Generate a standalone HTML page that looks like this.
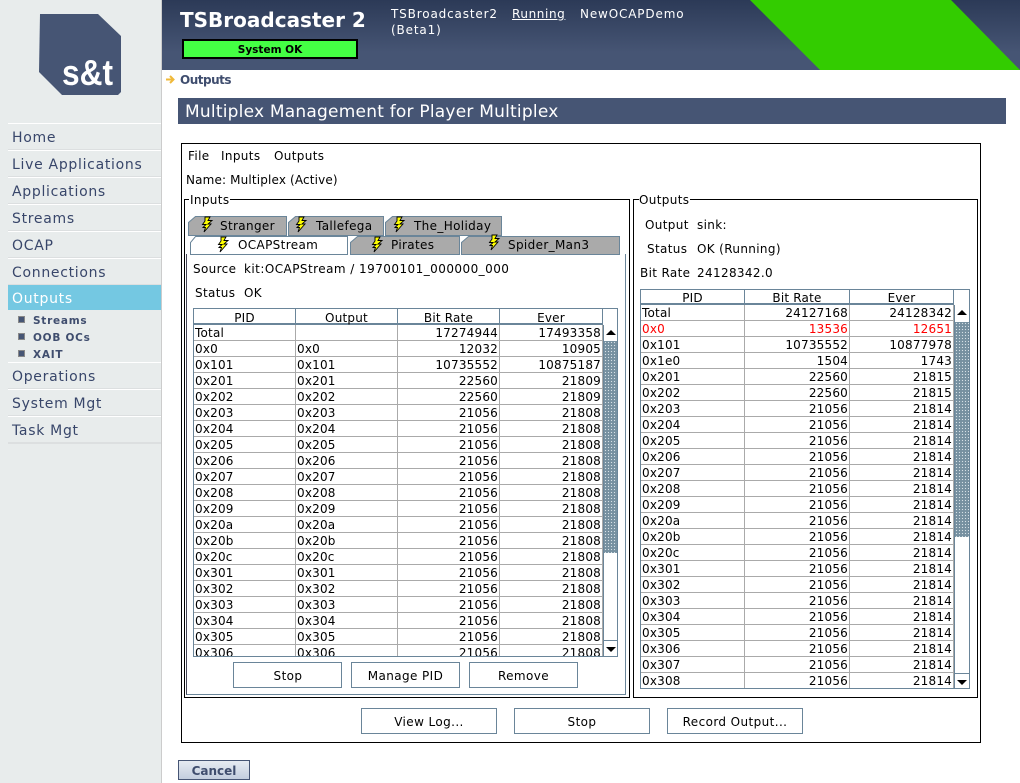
<!DOCTYPE html>
<html><head><meta charset="utf-8"><style>
html,body{margin:0;padding:0;background:#fff}
#p{position:relative;width:1020px;height:783px;overflow:hidden;background:#fff;font-family:"DejaVu Sans",sans-serif;font-size:12px;color:#000}
.a,.t{position:absolute}
.t{white-space:nowrap;line-height:16px}
.nav{position:absolute;left:8px;width:153px;height:25px;border-top:1px solid #fff;border-bottom:2px solid #dcdfe0;color:#38466a;font-size:14px;line-height:29px;text-indent:4px;letter-spacing:.7px}
.sub{position:absolute;left:33px;color:#3f4d6e;font-size:10.5px;font-weight:bold;line-height:16px;letter-spacing:.75px}
.bl{position:absolute;left:18px;width:5px;height:5px;background:#465574;border:1px solid #888}
.btn{position:absolute;box-sizing:border-box;border:1px solid #6a8599;background:#fff;text-align:center;line-height:26px;height:26px;letter-spacing:.4px}
table{border-spacing:0;table-layout:fixed;position:absolute;left:0;top:0}
td{box-sizing:border-box;height:16px;padding:2px 2px 0 1px;border-right:1px solid #aaa;border-bottom:1px solid #aaa;line-height:13px;white-space:nowrap;overflow:hidden;letter-spacing:.2px}
td.r{text-align:right;padding-right:1px}
tr.red td{color:#f00}
.hd{position:absolute;top:0;box-sizing:border-box;height:16px;text-align:center;line-height:18px;border-right:1px solid #6a8599;border-bottom:2px solid #6a8599;letter-spacing:.2px}
.thumb{position:absolute;background-color:#7690a0;background-image:radial-gradient(circle,#d6e0e6 .7px,transparent .8px);background-size:3px 3px}
.up{position:absolute;width:0;height:0;border-left:5px solid transparent;border-right:5px solid transparent;border-bottom:5px solid #000}
.dn{position:absolute;width:0;height:0;border-left:5px solid transparent;border-right:5px solid transparent;border-top:5px solid #000}
.tt{letter-spacing:.35px}
.hl{color:#fff;font-size:12px;letter-spacing:.85px}
</style></head><body><div id="p">
<!-- sidebar -->
<div class="a" style="left:0;top:0;width:161px;height:783px;background:#e8ecec;border-right:1px solid #ccc"></div>
<svg class="a" style="left:0;top:0" width="161" height="110"><polygon points="40,14 98,14 121,36 121,92 118,95 62,95 39,72" fill="#465574"/><text x="62" y="85" font-family="Liberation Sans" font-weight="bold" font-size="36" fill="#fff" textLength="51" lengthAdjust="spacingAndGlyphs">s&amp;t</text></svg>
<div class="nav" style="top:123px">Home</div>
<div class="nav" style="top:150px">Live Applications</div>
<div class="nav" style="top:177px">Applications</div>
<div class="nav" style="top:204px">Streams</div>
<div class="nav" style="top:231px">OCAP</div>
<div class="nav" style="top:258px">Connections</div>
<div class="nav" style="top:285px;background:#74c8e2;color:#fff;border:0;height:25px;line-height:28px">Outputs</div>
<div class="bl" style="top:316px"></div><div class="sub" style="top:313px">Streams</div>
<div class="bl" style="top:333px"></div><div class="sub" style="top:330px">OOB OCs</div>
<div class="bl" style="top:350px"></div><div class="sub" style="top:347px">XAIT</div>
<div class="nav" style="top:362px">Operations</div>
<div class="nav" style="top:389px">System Mgt</div>
<div class="nav" style="top:416px">Task Mgt</div>
<!-- header -->
<div class="a" style="left:162px;top:0;width:858px;height:70px;background:linear-gradient(#2c3a57,#465574 75%,#465574)"></div>
<svg class="a" style="left:162px;top:0" width="858" height="70"><polygon points="588,0 789,0 858,70 658,70" fill="#3c0"/></svg>
<div class="t" style="left:180px;top:8px;color:#fff;font-weight:bold;font-size:20px;line-height:24px">TSBroadcaster 2</div>
<div class="a" style="left:182px;top:39px;width:172px;height:16px;border:2px solid #000;background:#4f4;text-align:center;font-size:10.5px;font-weight:bold;line-height:18px">System OK</div>
<div class="t hl" style="left:391px;top:6px">TSBroadcaster2</div>
<div class="t hl" style="left:512px;top:6px;text-decoration:underline;letter-spacing:.6px">Running</div>
<div class="t hl" style="left:580px;top:6px">NewOCAPDemo</div>
<div class="t hl" style="left:391px;top:22px">(Beta1)</div>
<!-- breadcrumb -->
<svg class="a" style="left:165px;top:74px" width="12" height="12"><path d="M1 5.5H8M5 2L8.5 5.5L5 9" fill="none" stroke="#f0b93a" stroke-width="2"/></svg>
<div class="t" style="left:180px;top:72px;color:#3f4d6e;font-weight:bold;font-size:12px;letter-spacing:-.5px">Outputs</div>
<div class="a" style="left:178px;top:98px;width:828px;height:26px;background:#465574"></div>
<div class="t" style="left:185px;top:103px;color:#fff;font-size:17px;line-height:18px;letter-spacing:.22px">Multiplex Management for Player Multiplex</div>
<!-- main frame -->
<div class="a" style="left:181px;top:143px;width:798px;height:598px;border:1px solid #000"></div>
<div class="t tt" style="left:188px;top:148px">File</div>
<div class="t tt" style="left:221px;top:148px">Inputs</div>
<div class="t tt" style="left:274px;top:148px">Outputs</div>
<div class="t" style="left:186px;top:172px;letter-spacing:.15px">Name: Multiplex (Active)</div>
<!-- inputs group -->
<div class="a" style="left:184px;top:199px;width:444px;height:497px;border:1px solid #000"></div>
<div class="t tt" style="left:189px;top:192px;background:#fff;padding:0 1px">Inputs</div>
<div class="a" style="left:186px;top:254px;width:438px;height:440px;border-left:1px solid #445;border-right:1px solid #6a8599;border-bottom:1px solid #6a8599"></div>
<!-- tabs -->
<svg class="a" style="left:186px;top:212px" width="440" height="44">
<g stroke="#6a8599" fill="#aaa">
<polygon points="2.5,23.5 2.5,10.5 9.5,4.5 100.5,4.5 100.5,23.5"/>
<polygon points="102.5,23.5 102.5,10.5 109.5,4.5 197.5,4.5 197.5,23.5"/>
<polygon points="199.5,23.5 199.5,10.5 206.5,4.5 315.5,4.5 315.5,23.5"/>
<polygon points="164.5,42.5 164.5,30.5 171.5,24.5 273.5,24.5 273.5,42.5"/>
<polygon points="275.5,42.5 275.5,30.5 282.5,24.5 433.5,24.5 433.5,42.5"/>
<polygon points="4.5,42.5 4.5,30.5 9.5,24.5 161.5,24.5 161.5,42.5" fill="#fff"/>
</g>
<g fill="#ff0" stroke="#000" stroke-width=".9" stroke-linejoin="miter">
<path transform="translate(16,5)" d="M3 0H8L6 3.5H10L6 7H9L2 15L3.5 10.5H1L4 7.5H.5L3 4Z"/>
<path transform="translate(110,5)" d="M3 0H8L6 3.5H10L6 7H9L2 15L3.5 10.5H1L4 7.5H.5L3 4Z"/>
<path transform="translate(208,5)" d="M3 0H8L6 3.5H10L6 7H9L2 15L3.5 10.5H1L4 7.5H.5L3 4Z"/>
<path transform="translate(32,25)" d="M3 0H8L6 3.5H10L6 7H9L2 15L3.5 10.5H1L4 7.5H.5L3 4Z"/>
<path transform="translate(186,25)" d="M3 0H8L6 3.5H10L6 7H9L2 15L3.5 10.5H1L4 7.5H.5L3 4Z"/>
<path transform="translate(303,23)" d="M3 0H8L6 3.5H10L6 7H9L2 15L3.5 10.5H1L4 7.5H.5L3 4Z"/>
</g>
</svg>
<div class="t tt" style="left:220px;top:218px">Stranger</div>
<div class="t tt" style="left:316px;top:218px">Tallefega</div>
<div class="t tt" style="left:414px;top:218px">The_Holiday</div>
<div class="t tt" style="left:238px;top:237px">OCAPStream</div>
<div class="t tt" style="left:391px;top:237px">Pirates</div>
<div class="t tt" style="left:508px;top:237px">Spider_Man3</div>
<div class="t tt" style="left:193px;top:261px">Source</div>
<div class="t" style="left:244px;top:261px;letter-spacing:.45px">kit:OCAPStream / 19700101_000000_000</div>
<div class="t tt" style="left:195px;top:285px">Status</div>
<div class="t tt" style="left:244px;top:285px">OK</div>
<!-- left table -->
<div class="a" style="left:193px;top:308px;width:423px;height:347px;border:1px solid #6a8599;overflow:hidden">
<div class="hd" style="left:0;width:102px">PID</div>
<div class="hd" style="left:102px;width:102px">Output</div>
<div class="hd" style="left:204px;width:102px">Bit Rate</div>
<div class="hd" style="left:306px;width:103px">Ever</div>
<div class="a" style="left:0;top:16px;width:409px;height:331px;overflow:hidden">
<table style="width:409px"><colgroup><col style="width:102px"><col style="width:102px"><col style="width:102px"><col style="width:103px"></colgroup>
<tr><td>Total</td><td></td><td class="r">17274944</td><td class="r">17493358</td></tr>
<tr><td>0x0</td><td>0x0</td><td class="r">12032</td><td class="r">10905</td></tr>
<tr><td>0x101</td><td>0x101</td><td class="r">10735552</td><td class="r">10875187</td></tr>
<tr><td>0x201</td><td>0x201</td><td class="r">22560</td><td class="r">21809</td></tr>
<tr><td>0x202</td><td>0x202</td><td class="r">22560</td><td class="r">21809</td></tr>
<tr><td>0x203</td><td>0x203</td><td class="r">21056</td><td class="r">21808</td></tr>
<tr><td>0x204</td><td>0x204</td><td class="r">21056</td><td class="r">21808</td></tr>
<tr><td>0x205</td><td>0x205</td><td class="r">21056</td><td class="r">21808</td></tr>
<tr><td>0x206</td><td>0x206</td><td class="r">21056</td><td class="r">21808</td></tr>
<tr><td>0x207</td><td>0x207</td><td class="r">21056</td><td class="r">21808</td></tr>
<tr><td>0x208</td><td>0x208</td><td class="r">21056</td><td class="r">21808</td></tr>
<tr><td>0x209</td><td>0x209</td><td class="r">21056</td><td class="r">21808</td></tr>
<tr><td>0x20a</td><td>0x20a</td><td class="r">21056</td><td class="r">21808</td></tr>
<tr><td>0x20b</td><td>0x20b</td><td class="r">21056</td><td class="r">21808</td></tr>
<tr><td>0x20c</td><td>0x20c</td><td class="r">21056</td><td class="r">21808</td></tr>
<tr><td>0x301</td><td>0x301</td><td class="r">21056</td><td class="r">21808</td></tr>
<tr><td>0x302</td><td>0x302</td><td class="r">21056</td><td class="r">21808</td></tr>
<tr><td>0x303</td><td>0x303</td><td class="r">21056</td><td class="r">21808</td></tr>
<tr><td>0x304</td><td>0x304</td><td class="r">21056</td><td class="r">21808</td></tr>
<tr><td>0x305</td><td>0x305</td><td class="r">21056</td><td class="r">21808</td></tr>
<tr><td>0x306</td><td>0x306</td><td class="r">21056</td><td class="r">21808</td></tr>
</table></div>
<div class="a" style="left:409px;top:16px;width:1px;height:331px;background:#6a8599"></div>
<div class="up" style="left:412px;top:21px"></div>
<div class="thumb" style="left:410px;top:32px;width:13px;height:212px"></div>
<div class="a" style="left:410px;top:331px;width:13px;height:1px;background:#6a8599"></div>
<div class="dn" style="left:412px;top:338px"></div>
</div>
<!-- outputs group -->
<div class="a" style="left:633px;top:199px;width:343px;height:497px;border:1px solid #000"></div>
<div class="t tt" style="left:639px;top:192px;background:#fff;padding:0 1px 0 0">Outputs</div>
<div class="t tt" style="left:645px;top:217px">Output</div>
<div class="t tt" style="left:697px;top:217px">sink:</div>
<div class="t tt" style="left:647px;top:241px">Status</div>
<div class="t tt" style="left:697px;top:241px">OK (Running)</div>
<div class="t tt" style="left:640px;top:265px">Bit Rate</div>
<div class="t tt" style="left:697px;top:265px">24128342.0</div>
<!-- right table -->
<div class="a" style="left:640px;top:289px;width:328px;height:398px;border:1px solid #6a8599;overflow:hidden">
<div class="hd" style="left:0;width:104px;height:15px;line-height:16px">PID</div>
<div class="hd" style="left:104px;width:105px;height:15px;line-height:16px">Bit Rate</div>
<div class="hd" style="left:209px;width:104px;height:15px;line-height:16px">Ever</div>
<div class="a" style="left:0;top:15px;width:313px;height:383px;overflow:hidden">
<table style="width:313px"><colgroup><col style="width:104px"><col style="width:105px"><col style="width:104px"></colgroup>
<tr><td>Total</td><td class="r">24127168</td><td class="r">24128342</td></tr>
<tr class="red"><td>0x0</td><td class="r">13536</td><td class="r">12651</td></tr>
<tr><td>0x101</td><td class="r">10735552</td><td class="r">10877978</td></tr>
<tr><td>0x1e0</td><td class="r">1504</td><td class="r">1743</td></tr>
<tr><td>0x201</td><td class="r">22560</td><td class="r">21815</td></tr>
<tr><td>0x202</td><td class="r">22560</td><td class="r">21815</td></tr>
<tr><td>0x203</td><td class="r">21056</td><td class="r">21814</td></tr>
<tr><td>0x204</td><td class="r">21056</td><td class="r">21814</td></tr>
<tr><td>0x205</td><td class="r">21056</td><td class="r">21814</td></tr>
<tr><td>0x206</td><td class="r">21056</td><td class="r">21814</td></tr>
<tr><td>0x207</td><td class="r">21056</td><td class="r">21814</td></tr>
<tr><td>0x208</td><td class="r">21056</td><td class="r">21814</td></tr>
<tr><td>0x209</td><td class="r">21056</td><td class="r">21814</td></tr>
<tr><td>0x20a</td><td class="r">21056</td><td class="r">21814</td></tr>
<tr><td>0x20b</td><td class="r">21056</td><td class="r">21814</td></tr>
<tr><td>0x20c</td><td class="r">21056</td><td class="r">21814</td></tr>
<tr><td>0x301</td><td class="r">21056</td><td class="r">21814</td></tr>
<tr><td>0x302</td><td class="r">21056</td><td class="r">21814</td></tr>
<tr><td>0x303</td><td class="r">21056</td><td class="r">21814</td></tr>
<tr><td>0x304</td><td class="r">21056</td><td class="r">21814</td></tr>
<tr><td>0x305</td><td class="r">21056</td><td class="r">21814</td></tr>
<tr><td>0x306</td><td class="r">21056</td><td class="r">21814</td></tr>
<tr><td>0x307</td><td class="r">21056</td><td class="r">21814</td></tr>
<tr><td>0x308</td><td class="r">21056</td><td class="r">21814</td></tr>
</table></div>
<div class="a" style="left:313px;top:15px;width:1px;height:383px;background:#6a8599"></div>
<div class="up" style="left:316px;top:20px"></div>
<div class="thumb" style="left:314px;top:32px;width:14px;height:215px"></div>
<div class="a" style="left:314px;top:383px;width:14px;height:1px;background:#6a8599"></div>
<div class="dn" style="left:316px;top:390px"></div>
</div>
<!-- buttons -->
<div class="btn" style="left:233px;top:662px;width:109px;padding-left:1px">Stop</div>
<div class="btn" style="left:351px;top:662px;width:109px">Manage PID</div>
<div class="btn" style="left:469px;top:662px;width:109px">Remove</div>
<div class="btn" style="left:361px;top:708px;width:136px">View Log...</div>
<div class="btn" style="left:514px;top:708px;width:136px">Stop</div>
<div class="btn" style="left:667px;top:708px;width:136px">Record Output...</div>
<div class="a" style="left:178px;top:760px;width:70px;height:18px;border:1px solid #465574;background:linear-gradient(#e6ebf2,#c3cede);text-align:center;color:#3f4d6e;font-weight:bold;font-size:12px;line-height:20px">Cancel</div>
</div></body></html>
